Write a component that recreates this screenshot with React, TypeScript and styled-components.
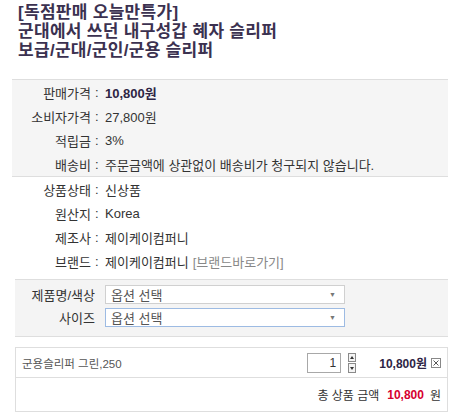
import React from "react";
import styled, { createGlobalStyle } from "styled-components";

const Global = createGlobalStyle`
  html, body { margin: 0; padding: 0; background: #fff; }
  body {
    font-family: "Liberation Sans", "Noto Sans CJK KR", sans-serif;
    font-size: 13px;
    color: #333;
  }
`;

const Page = styled.div`
  width: 459px;
  height: 420px;
  overflow: hidden;
`;

const Title = styled.h1`
  margin: 0;
  padding: 3px 0 0 18px;
  font-size: 17px;
  line-height: 19px;
  letter-spacing: 0.3px;
  font-weight: bold;
  color: #3b3150;
`;

const PriceBox = styled.div`
  margin: 19px 0 0 12px;
  width: 436px;
  background: #f5f5f5;
  border-top: 1px solid #dedede;
  border-bottom: 1px solid #dedede;
`;

const InfoBox = styled.div`
  margin-left: 15px;
  width: 433px;
  padding-bottom: 6px;
  border-bottom: 1px solid #dedede;
`;

const Row = styled.div`
  display: flex;
  align-items: center;
  height: 24px;
`;

const Label = styled.span<{ $w: number }>`
  width: ${(p) => p.$w}px;
  text-align: right;
  white-space: nowrap;
`;

const Colon = styled.span`
  width: 14px;
  padding-left: 4px;
  box-sizing: border-box;
`;

const Value = styled.span<{ $bold?: boolean }>`
  font-weight: ${(p) => (p.$bold ? "bold" : "normal")};
  color: ${(p) => (p.$bold ? "#2e2545" : "#333")};
  white-space: nowrap;
`;

const Link = styled.span`
  color: #888;
  margin-left: 4px;
`;

const OptionBox = styled.div`
  margin-left: 15px;
  width: 433px;
  background: #f4f4f4;
  border-bottom: 1px solid #dedede;
  padding: 5px 0 9px;
  display: flex;
  flex-direction: column;
  gap: 4px;
`;

const OptionRow = styled.div`
  display: flex;
  align-items: center;
  gap: 10px;
`;

const OptLabel = styled.span`
  width: 80px;
  text-align: right;
  color: #333;
  white-space: nowrap;
`;

const Select = styled.div<{ $focus?: boolean }>`
  width: 240px;
  height: 19px;
  box-sizing: border-box;
  background: #fff;
  border: 1px solid ${(p) => (p.$focus ? "#9dbbe3" : "#d0d0d0")};
  display: flex;
  align-items: center;
  justify-content: space-between;
  padding: 0 8px 0 5px;
  color: #555;
`;

const Arrow = styled.span`
  font-size: 7px;
  color: #777;
`;

const Cart = styled.div`
  margin: 10px 0 0 15px;
  width: 433px;
  box-sizing: border-box;
  border: 1px solid #dedede;
`;

const ItemRow = styled.div`
  display: flex;
  align-items: center;
  height: 29px;
  border-bottom: 1px solid #dedede;
  padding: 0 6px;
`;

const ItemName = styled.span`
  font-size: 11.5px;
  color: #555;
  flex: 1;
`;

const Qty = styled.div`
  width: 34px;
  height: 20px;
  box-sizing: border-box;
  border: 1px solid #a8a8a8;
  text-align: right;
  padding-right: 4px;
  line-height: 18px;
  font-size: 12px;
  color: #333;
`;

const Spinner = styled.svg`
  margin-left: 7px;
  display: block;
`;

const ItemPrice = styled.span`
  margin-left: 23px;
  font-size: 12px;
  font-weight: bold;
  color: #2e2545;
`;

const Remove = styled.svg`
  margin-left: 4px;
  display: block;
`;

const TotalRow = styled.div`
  height: 33px;
  display: flex;
  align-items: center;
  justify-content: flex-end;
  padding-right: 6px;
  font-size: 12px;
  color: #333;
`;

const TotalPrice = styled.span`
  color: #d6002f;
  font-weight: bold;
  margin: 0 6px 0 8px;
`;

export default function App() {
  return (
    <Page>
      <Global />
      <Title>
        [독점판매 오늘만특가]
        <br />
        군대에서 쓰던 내구성갑 혜자 슬리퍼
        <br />
        보급/군대/군인/군용 슬리퍼
      </Title>

      <PriceBox>
        <Row>
          <Label $w={79}>판매가격</Label>
          <Colon>:</Colon>
          <Value $bold>10,800원</Value>
        </Row>
        <Row>
          <Label $w={79}>소비자가격</Label>
          <Colon>:</Colon>
          <Value>27,800원</Value>
        </Row>
        <Row>
          <Label $w={79}>적립금</Label>
          <Colon>:</Colon>
          <Value>3%</Value>
        </Row>
        <Row>
          <Label $w={79}>배송비</Label>
          <Colon>:</Colon>
          <Value>주문금액에 상관없이 배송비가 청구되지 않습니다.</Value>
        </Row>
      </PriceBox>

      <InfoBox>
        <Row>
          <Label $w={76}>상품상태</Label>
          <Colon>:</Colon>
          <Value>신상품</Value>
        </Row>
        <Row>
          <Label $w={76}>원산지</Label>
          <Colon>:</Colon>
          <Value>Korea</Value>
        </Row>
        <Row>
          <Label $w={76}>제조사</Label>
          <Colon>:</Colon>
          <Value>제이케이컴퍼니</Value>
        </Row>
        <Row>
          <Label $w={76}>브랜드</Label>
          <Colon>:</Colon>
          <Value>
            제이케이컴퍼니<Link>[브랜드바로가기]</Link>
          </Value>
        </Row>
      </InfoBox>

      <OptionBox>
        <OptionRow>
          <OptLabel>제품명/색상</OptLabel>
          <Select>
            <span>옵션 선택</span>
            <Arrow>▼</Arrow>
          </Select>
        </OptionRow>
        <OptionRow>
          <OptLabel>사이즈</OptLabel>
          <Select $focus>
            <span>옵션 선택</span>
            <Arrow>▼</Arrow>
          </Select>
        </OptionRow>
      </OptionBox>

      <Cart>
        <ItemRow>
          <ItemName>군용슬리퍼 그린,250</ItemName>
          <Qty>1</Qty>
          <Spinner width="8" height="20" viewBox="0 0 8 20">
            <rect x="0.5" y="0.5" width="7" height="8" fill="#f4f4f4" stroke="#8a8a8a" />
            <path d="M2 6 L4 3 L6 6 Z" fill="#333" />
            <rect x="0.5" y="10.5" width="7" height="9" fill="#f4f4f4" stroke="#8a8a8a" />
            <path d="M2 14 L4 17 L6 14 Z" fill="#333" />
          </Spinner>
          <ItemPrice>10,800원</ItemPrice>
          <Remove width="10" height="10" viewBox="0 0 10 10">
            <rect x="0.5" y="0.5" width="9" height="9" fill="#fff" stroke="#888" />
            <path d="M2.5 2.5 L7.5 7.5 M7.5 2.5 L2.5 7.5" stroke="#555" strokeWidth="1" />
          </Remove>
        </ItemRow>
        <TotalRow>
          총 상품 금액<TotalPrice>10,800</TotalPrice>원
        </TotalRow>
      </Cart>
    </Page>
  );
}
